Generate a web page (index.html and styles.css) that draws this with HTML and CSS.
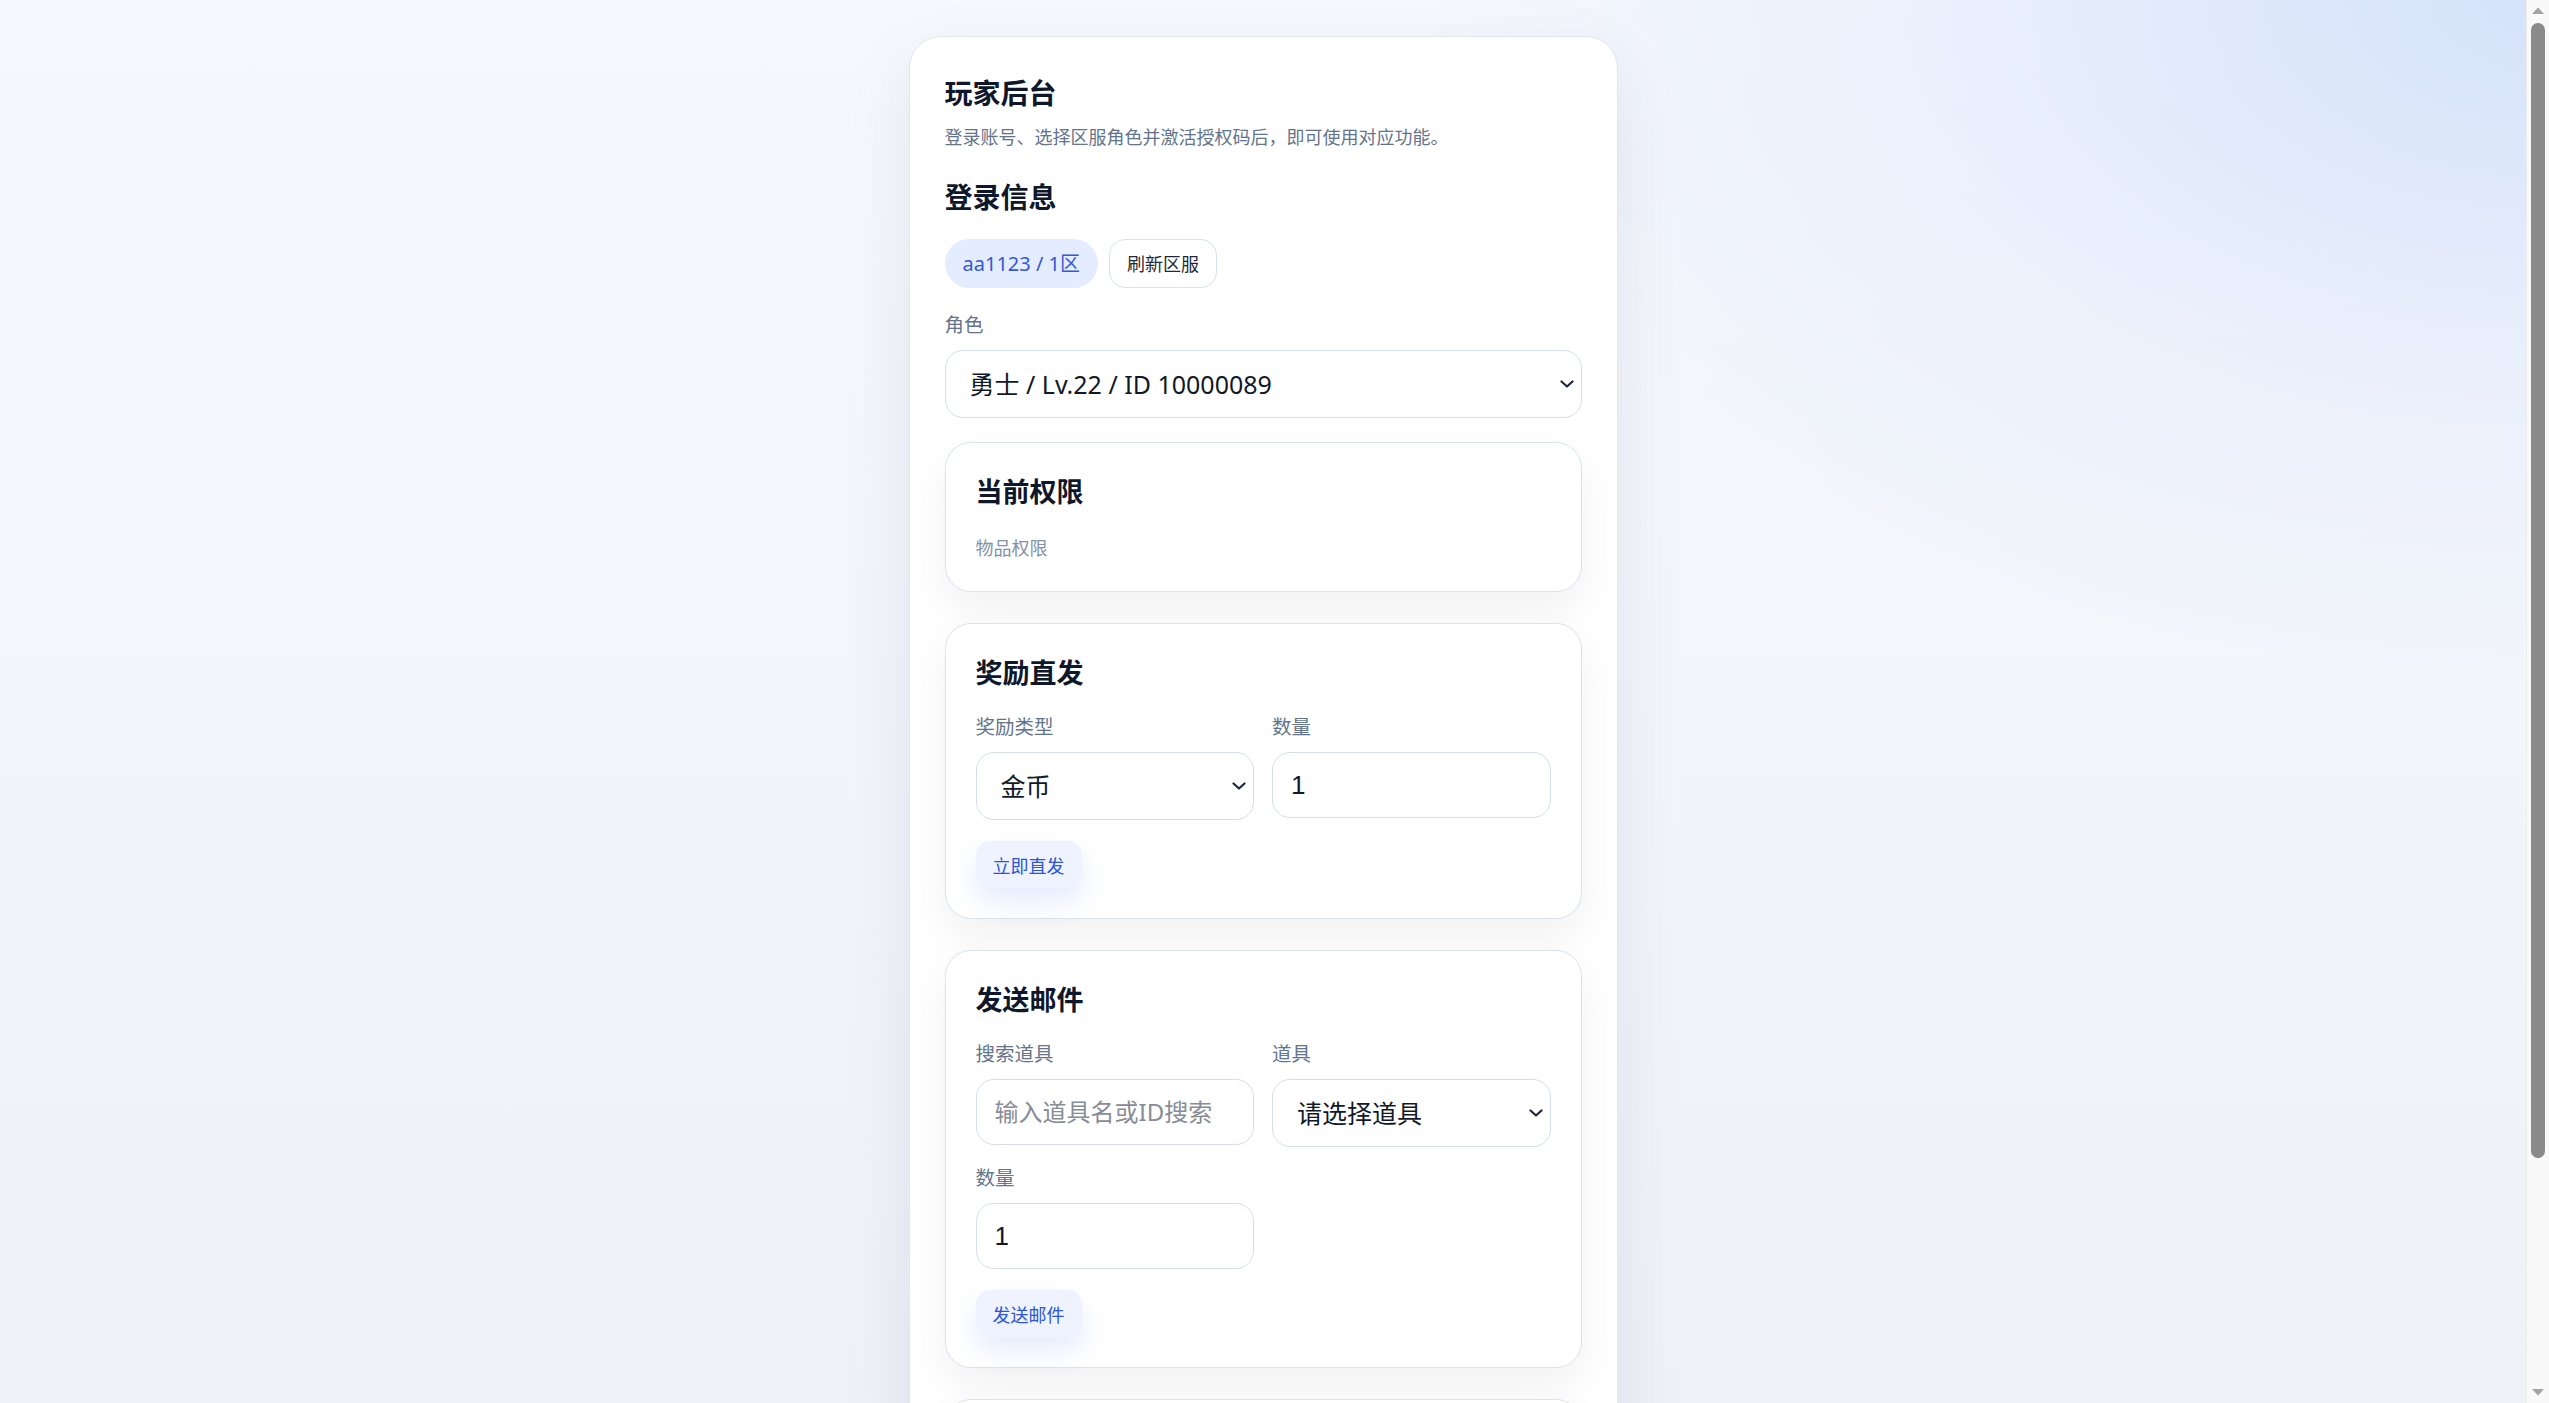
FILE: index.html
```html
<!DOCTYPE html>
<html lang="zh-CN">
<head>
<meta charset="utf-8">
<title>玩家后台</title>
<link rel="stylesheet" href="styles.css">
</head>
<body>
<div class="viewport">
<main class="panel">
  <h1 class="title">玩家后台</h1>
  <p class="subtitle">登录账号、选择区服角色并激活授权码后，即可使用对应功能。</p>

  <h2 class="section-title">登录信息</h2>
  <div class="chips">
    <span class="chip chip-account">aa1123 / 1区</span>
    <button class="chip chip-refresh" type="button">刷新区服</button>
  </div>

  <label class="label role-label">角色</label>
  <div class="select-wrap select-wrap-lg">
    <select class="control select"><option>勇士 / Lv.22 / ID 10000089</option></select>
    <svg class="chevron" viewBox="0 0 14 8" width="14" height="8"><path d="M1.5 1.5 L7 6.5 L12.5 1.5"/></svg>
  </div>

  <section class="card">
    <h3 class="card-title">当前权限</h3>
    <p class="muted">物品权限</p>
  </section>

  <section class="card">
    <h3 class="card-title">奖励直发</h3>
    <div class="grid">
      <div class="field">
        <label class="label">奖励类型</label>
        <div class="select-wrap">
          <select class="control select"><option>金币</option></select>
          <svg class="chevron" viewBox="0 0 14 8" width="14" height="8"><path d="M1.5 1.5 L7 6.5 L12.5 1.5"/></svg>
        </div>
      </div>
      <div class="field">
        <label class="label">数量</label>
        <input class="control input" type="text" value="1">
      </div>
    </div>
    <button class="action" type="button">立即直发</button>
  </section>

  <section class="card">
    <h3 class="card-title">发送邮件</h3>
    <div class="grid">
      <div class="field">
        <label class="label">搜索道具</label>
        <input class="control input" type="text" placeholder="输入道具名或ID搜索">
      </div>
      <div class="field">
        <label class="label">道具</label>
        <div class="select-wrap">
          <select class="control select"><option>请选择道具</option></select>
          <svg class="chevron" viewBox="0 0 14 8" width="14" height="8"><path d="M1.5 1.5 L7 6.5 L12.5 1.5"/></svg>
        </div>
      </div>
      <div class="field">
        <label class="label">数量</label>
        <input class="control input" type="text" value="1">
      </div>
    </div>
    <button class="action" type="button">发送邮件</button>
  </section>

  <section class="card">
    <h3 class="card-title">激活授权码</h3>
    <div class="grid">
      <div class="field">
        <label class="label">授权码</label>
        <input class="control input" type="text" placeholder="请输入授权码">
      </div>
    </div>
    <button class="action" type="button">激活</button>
  </section>
</main>
</div>
<div class="scrollbar" aria-hidden="true">
  <div class="sb-btn sb-up"><svg viewBox="0 0 12 7" width="12" height="7"><path d="M0 7 L6 0.5 L12 7 Z"/></svg></div>
  <div class="sb-track"><div class="sb-thumb"></div></div>
  <div class="sb-btn sb-down"><svg viewBox="0 0 12 7" width="12" height="7"><path d="M0 0 L6 6.5 L12 0 Z"/></svg></div>
</div>
</body>
</html>
```

FILE: styles.css
```css
* { box-sizing: border-box; }

html, body { height: 100%; }

body {
  margin: 0;
  overflow: hidden;
  display: flex;
  font-family: "Noto Sans", "Noto Sans CJK SC", sans-serif;
  color: #0f172a;
  background:
    radial-gradient(ellipse 1500px 900px at 100% 0%, rgba(212, 226, 250, 1) 0%, rgba(226, 234, 252, 0.6) 40%, rgba(240, 244, 250, 0) 75%),
    linear-gradient(180deg, #f6f8fd 0%, #eef2f7 100%);
}

.viewport {
  flex: 1;
  min-width: 0;
  height: 100vh;
  overflow: hidden;
}

/* imitation of the browser scrollbar shown in the screenshot */
.scrollbar {
  width: 23px;
  flex: none;
  height: 100vh;
  display: flex;
  flex-direction: column;
  background: #f9f9f9;
  border-left: 1px solid #ededed;
}

.sb-btn {
  height: 20px;
  flex: none;
  display: flex;
  justify-content: center;
}

.sb-up { align-items: flex-end; padding-bottom: 6px; }
.sb-down { align-items: flex-start; padding-top: 6px; }

.sb-btn svg { fill: #a3a3a3; }

.sb-track {
  flex: 1;
  padding: 3px 4px 0 4px;
}

.sb-thumb {
  height: 1135px;
  background: #8a8a8a;
  border-radius: 7px;
}

.panel {
  width: 709px;
  margin: 36px auto;
  padding: 36px 35px;
  background: #ffffff;
  border: 1px solid #dfe6f0;
  border-radius: 32px;
  box-shadow: 0 24px 70px rgba(15, 23, 42, 0.08);
  display: flex;
  flex-direction: column;
  align-items: stretch;
}

.title {
  margin: 0;
  font-size: 28px;
  line-height: 40px;
  font-weight: 700;
  color: #0f172a;
}

.subtitle {
  margin: 10px 0 0;
  font-size: 18px;
  line-height: 28px;
  color: #64748b;
}

.section-title {
  margin: 26px 0 0;
  font-size: 28px;
  line-height: 40px;
  font-weight: 700;
  color: #0f172a;
}

.chips {
  margin-top: 22px;
  display: flex;
  gap: 11px;
}

.chip {
  height: 49px;
  display: inline-flex;
  align-items: center;
  font-family: inherit;
  line-height: 1;
  margin: 0;
}

.chip-account {
  padding: 0 18px;
  font-size: 20px;
  border-radius: 999px;
  background: #e4edff;
  color: #3558d4;
}

.chip-refresh {
  padding: 0 17px;
  font-size: 18px;
  border-radius: 16px;
  background: #ffffff;
  border: 1px solid #d8e1ee;
  color: #1f2937;
}

.label {
  display: block;
  font-size: 19.5px;
  line-height: 26px;
  color: #64748b;
}

.role-label { margin-top: 24px; }

.select-wrap {
  position: relative;
}

.select-wrap-lg { margin-top: 12px; }

.control {
  display: block;
  width: 100%;
  margin: 0;
  background: #ffffff;
  border: 1px solid #d5deeb;
  border-radius: 18px;
  color: #111827;
  outline: none;
}

.select {
  -webkit-appearance: none;
  appearance: none;
  height: 68px;
  padding: 0 40px 0 24px;
  font-family: "Noto Sans", "Noto Sans CJK SC", sans-serif;
  font-size: 25px;
}

.input {
  height: 66px;
  padding: 0 18px;
  font-family: "Liberation Sans", "Noto Sans CJK SC", sans-serif;
  font-size: 26px;
}

.input::placeholder {
  color: #878c96;
  font-family: "Noto Sans", "Noto Sans CJK SC", sans-serif;
  font-size: 24px;
}

.chevron {
  position: absolute;
  right: 8px;
  top: 50%;
  margin-top: -4px;
  fill: none;
  stroke: #1e293b;
  stroke-width: 2.2;
  stroke-linecap: round;
  stroke-linejoin: round;
}

.card {
  margin-top: 31px;
  padding: 30px;
  background: #ffffff;
  border: 1px solid #dbe3ef;
  border-radius: 26px;
  box-shadow: 0 18px 44px rgba(15, 23, 42, 0.06);
}

.panel > .card:first-of-type { margin-top: 24px; }

.card-title {
  margin: 0;
  font-size: 27px;
  line-height: 38px;
  font-weight: 700;
  color: #0f172a;
}

.muted {
  margin: 24px 0 0;
  font-size: 18px;
  line-height: 26px;
  color: #8391a7;
}

.grid {
  margin-top: 22px;
  display: grid;
  grid-template-columns: 1fr 1fr;
  column-gap: 18px;
  row-gap: 18px;
}

.field {
  display: flex;
  flex-direction: column;
  gap: 12px;
}

.action {
  margin-top: 21px;
  height: 47px;
  padding: 0 17px;
  border: none;
  border-radius: 14px;
  background: #eef3ff;
  color: #2d55d6;
  font-family: inherit;
  font-size: 18px;
  box-shadow: 0 14px 26px rgba(70, 110, 240, 0.13);
  align-self: flex-start;
}
```
